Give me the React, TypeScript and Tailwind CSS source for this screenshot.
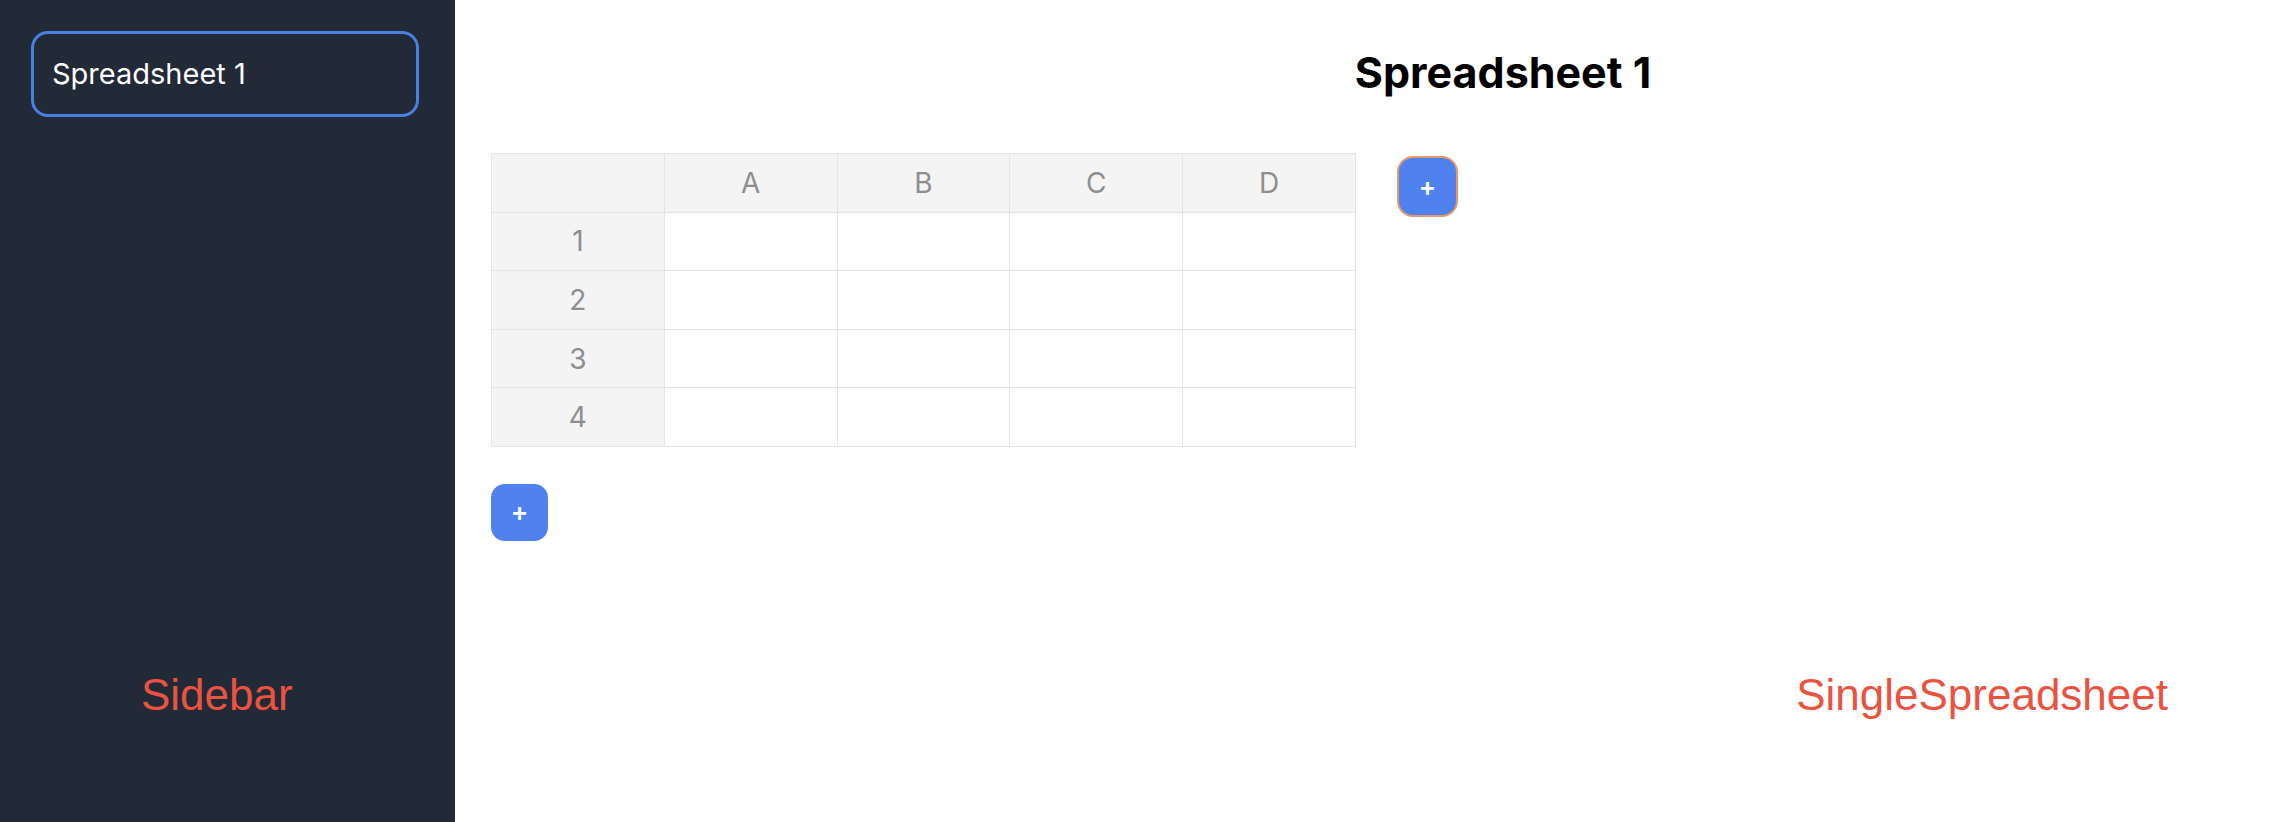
const columns = ['A', 'B', 'C', 'D']
const rows = [1, 2, 3, 4]

function AddButton({ focused }: { focused?: boolean }) {
  return (
    <button
      className={
        'flex h-[57px] w-[57px] items-center justify-center rounded-[14px] bg-[#4f82ef] text-[26px] font-semibold leading-none text-white ' +
        (focused ? 'ring-2 ring-[#e49a66]' : '')
      }
    >
      +
    </button>
  )
}

function Sheet() {
  return (
    <div className="grid w-[865px] grid-cols-[repeat(5,172.8px)] border-l border-t border-[#e5e5e5] text-[28px] text-[#8e8e8e]">
      <div className="h-[58.6px] border-b border-r border-[#e5e5e5] bg-[#f4f4f4]" />
      {columns.map((c) => (
        <div
          key={c}
          className="flex h-[58.6px] items-center justify-center border-b border-r border-[#e5e5e5] bg-[#f4f4f4]"
        >
          {c}
        </div>
      ))}
      {rows.map((r) => (
        <div key={r} className="contents">
          <div className="flex h-[58.6px] items-center justify-center border-b border-r border-[#e5e5e5] bg-[#f4f4f4]">
            {r}
          </div>
          {columns.map((c) => (
            <div key={c + r} className="h-[58.6px] border-b border-r border-[#e5e5e5] bg-white" />
          ))}
        </div>
      ))}
    </div>
  )
}

export default function App() {
  return (
    <div className="flex h-screen w-full font-['Inter',sans-serif]">
      <aside className="flex w-[455px] shrink-0 flex-col bg-[#222937]">
        <div className="pl-[31px] pr-[36px] pt-[31px]">
          <div className="flex h-[86px] items-center rounded-[17px] border-[3px] border-[#4a80e6] px-[18px] text-[29px] text-white">
            Spreadsheet 1
          </div>
        </div>
        <div className="flex-1" />
        <div className="pb-[105px] pl-[141px] font-['Liberation_Sans',Arial,sans-serif] text-[44px] leading-none text-[#e9533f]">
          Sidebar
        </div>
      </aside>

      <main className="flex flex-1 flex-col bg-white pl-[36px]">
        <div className="pl-[240px] pt-[51px] text-center">
          <h1 className="text-[43px] font-bold leading-none text-black">Spreadsheet 1</h1>
        </div>

        <div className="mt-[59px] flex items-start gap-[43px]">
          <Sheet />
          <div className="mt-[5px]">
            <AddButton focused />
          </div>
        </div>

        <div className="mt-[37px]">
          <AddButton />
        </div>

        <div className="flex-1" />
        <div className="self-end pb-[105px] pr-[107px] font-['Liberation_Sans',Arial,sans-serif] text-[44px] leading-none text-[#e9533f]">
          SingleSpreadsheet
        </div>
      </main>
    </div>
  )
}
